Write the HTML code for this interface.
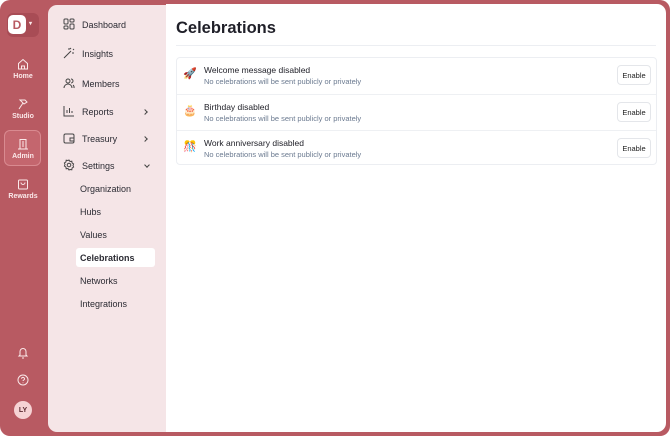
<!DOCTYPE html>
<html><head><style>
*{margin:0;padding:0;box-sizing:border-box}
body{width:670px;height:436px;background:#fff;font-family:"Liberation Sans",sans-serif;overflow:hidden;position:relative}
.win{position:absolute;left:0;top:0;width:670px;height:436px;background:#b85a62;border-radius:10px}
.side{position:absolute;left:48px;top:5px;width:119px;height:427px;background:#f5e5e7;border-radius:9px 0 0 9px;border-right:1px solid #ece4ea}
.main{position:absolute;left:166px;top:4px;width:500px;height:428px;background:#fff;border-radius:0 9px 9px 0}
.rail{position:absolute;left:0;top:0;width:48px;color:#fbe9ea;font-size:7px;font-weight:bold;text-align:center}
.ri{position:absolute;left:0;width:46px;text-align:center}
.ri svg{display:block;margin:0 auto 3px}
.nav{position:absolute;left:63px;font-size:9px;color:#2b2b33}
.nav svg{position:absolute;left:0;top:-2px}
.nav span{position:absolute;left:19px;white-space:nowrap}
.sub{position:absolute;left:80px;font-size:9px;color:#2b2b33}
.chev{position:absolute;left:143px;width:4px;height:4px;border-right:1.2px solid #444;border-top:1.2px solid #444;transform:rotate(45deg)}
h1{position:absolute;left:176px;top:19px;font-size:16.5px;font-weight:bold;color:#1f1f28}
.hr{position:absolute;left:176px;top:45px;width:480px;height:1px;background:#eceef2}
.card{position:absolute;left:176px;top:57px;width:481px;height:108px;border:1px solid #eceef2;border-radius:4px}
.row{position:absolute;left:0;width:479px;height:36px;border-top:1px solid #eef0f3}
.row .e{position:absolute;left:6px;top:9px;font-size:11px}
.row b{position:absolute;left:27px;top:7px;font-size:8.5px;color:#22222a;font-weight:normal}
.row i{position:absolute;left:27px;top:19px;font-size:7.5px;color:#6b7a90;font-style:normal}
.btn{position:absolute;left:440px;top:7px;width:34px;height:20px;border:1px solid #e4e6ea;border-radius:4px;font-size:7.5px;color:#222;display:flex;align-items:center;justify-content:center}
</style></head><body>
<div class="win"></div>
<div class="side"></div>
<div class="main"></div>
<div class="rail">
 <div style="position:absolute;left:7px;top:13px;width:32px;height:24px;border-radius:6px;background:#a84c55"></div>
 <div style="position:absolute;left:8px;top:15px;width:18px;height:19px;border-radius:5px;background:#fff;color:#b85a62;font-size:12px;display:flex;align-items:center;justify-content:center">D</div>
 <div style="position:absolute;left:29px;top:20px;font-size:6px">▾</div>
 <div class="ri" style="top:58px"><svg width="12" height="12" viewBox="0 0 12 12" fill="none" stroke="#fbe9ea" stroke-width="1"><path d="M1.5 5.5L6 1.5l4.5 4V11h-9z"/><path d="M4.5 11V8h3v3"/></svg>Home</div>
 <div class="ri" style="top:98px"><svg width="12" height="12" viewBox="0 0 12 12" fill="none" stroke="#fbe9ea" stroke-width="1"><path d="M3 2l5 0 2 2-3 2zM6 5l-4 6"/></svg>Studio</div>
 <div style="position:absolute;left:4px;top:130px;width:37px;height:36px;border:1px solid #d98a90;border-radius:6px;background:#c4666e"></div>
 <div class="ri" style="top:138px"><svg width="12" height="12" viewBox="0 0 12 12" fill="none" stroke="#fbe9ea" stroke-width="1"><rect x="3" y="1.5" width="6" height="9.5"/><path d="M1 11h10M5 4h2M5 6h2M5 8h2"/></svg>Admin</div>
 <div class="ri" style="top:178px"><svg width="12" height="12" viewBox="0 0 12 12" fill="none" stroke="#fbe9ea" stroke-width="1"><rect x="1.5" y="2" width="9" height="9" rx="1"/><path d="M4 4.5a2 2 0 004 0"/></svg>Rewards</div>
 <div class="ri" style="top:346px"><svg width="12" height="13" viewBox="0 0 12 13" fill="none" stroke="#fbe9ea" stroke-width="1"><path d="M3 9V5.5a3 3 0 016 0V9l1 1H2zM5 12h2"/></svg></div>
 <div class="ri" style="top:374px"><svg width="12" height="12" viewBox="0 0 12 12" fill="none" stroke="#fbe9ea" stroke-width="1"><circle cx="6" cy="6" r="5"/><path d="M4.5 4.7a1.5 1.5 0 113 .3c0 1-1.5 1-1.5 2M6 8.5v.6"/></svg></div>
 <div style="position:absolute;left:14px;top:401px;width:18px;height:18px;border-radius:9px;background:#f6d3d4;color:#5a2a30;font-size:7px;display:flex;align-items:center;justify-content:center">LY</div>
</div>
<div class="nav" style="top:20px"><svg width="12" height="12" viewBox="0 0 12 12" fill="none" stroke="#444" stroke-width="1"><rect x="1" y="1" width="4" height="5" rx="1"/><rect x="7" y="1" width="4" height="3" rx="1"/><rect x="1" y="8" width="4" height="3" rx="1"/><rect x="7" y="6" width="4" height="5" rx="1"/></svg><span>Dashboard</span></div>
<div class="nav" style="top:49px"><svg width="12" height="12" viewBox="0 0 12 12" fill="none" stroke="#444" stroke-width="1"><path d="M1 11l7-7M7 2l1-1M10 3l1-1M9 6h2M6 1v2"/></svg><span>Insights</span></div>
<div class="nav" style="top:79px"><svg width="12" height="12" viewBox="0 0 12 12" fill="none" stroke="#444" stroke-width="1"><circle cx="5" cy="4" r="2"/><path d="M1 11a4 4 0 018 0M8 2a2 2 0 010 4M10 8a3 3 0 011 3"/></svg><span>Members</span></div>
<div class="nav" style="top:107px"><svg width="12" height="12" viewBox="0 0 12 12" fill="none" stroke="#444" stroke-width="1"><path d="M1 1v10h10M4 8V5M6.5 8V3M9 8V6"/></svg><span>Reports</span></div>
<div class="chev" style="top:110px"></div>
<div class="nav" style="top:134px"><svg width="12" height="12" viewBox="0 0 12 12" fill="none" stroke="#444" stroke-width="1"><rect x="1" y="2" width="10" height="9" rx="1.5"/><path d="M7 6h4v3H7z"/></svg><span>Treasury</span></div>
<div class="chev" style="top:137px"></div>
<div class="nav" style="top:161px"><svg width="12" height="12" viewBox="0 0 12 12" fill="none" stroke="#444" stroke-width="1"><circle cx="6" cy="6" r="1.8"/><path d="M6 1l1 1.5 1.8-.3.3 1.8L10.6 5 10 6.5l.6 1.5-1.5 1 -.3 1.8-1.8-.3L6 11l-1-1.5-1.8.3-.3-1.8L1.4 7 2 5.5 1.4 4l1.5-1 .3-1.8 1.8.3z"/></svg><span>Settings</span></div>
<div class="chev" style="top:163px;left:145px;transform:rotate(135deg)"></div>
<div class="sub" style="top:184px">Organization</div>
<div class="sub" style="top:207px">Hubs</div>
<div class="sub" style="top:230px">Values</div>
<div style="position:absolute;left:76px;top:248px;width:79px;height:19px;background:#fff;border-radius:3px"></div>
<div class="sub" style="top:253px;font-weight:bold">Celebrations</div>
<div class="sub" style="top:276px">Networks</div>
<div class="sub" style="top:299px">Integrations</div>
<h1>Celebrations</h1>
<div class="hr"></div>
<div class="card">
 <div class="row" style="top:0;border-top:none"><span class="e">🚀</span><b>Welcome message disabled</b><i>No celebrations will be sent publicly or privately</i><div class="btn">Enable</div></div>
 <div class="row" style="top:36px"><span class="e">🎂</span><b>Birthday disabled</b><i>No celebrations will be sent publicly or privately</i><div class="btn">Enable</div></div>
 <div class="row" style="top:72px"><span class="e">🎊</span><b>Work anniversary disabled</b><i>No celebrations will be sent publicly or privately</i><div class="btn">Enable</div></div>
</div>
</body></html>
